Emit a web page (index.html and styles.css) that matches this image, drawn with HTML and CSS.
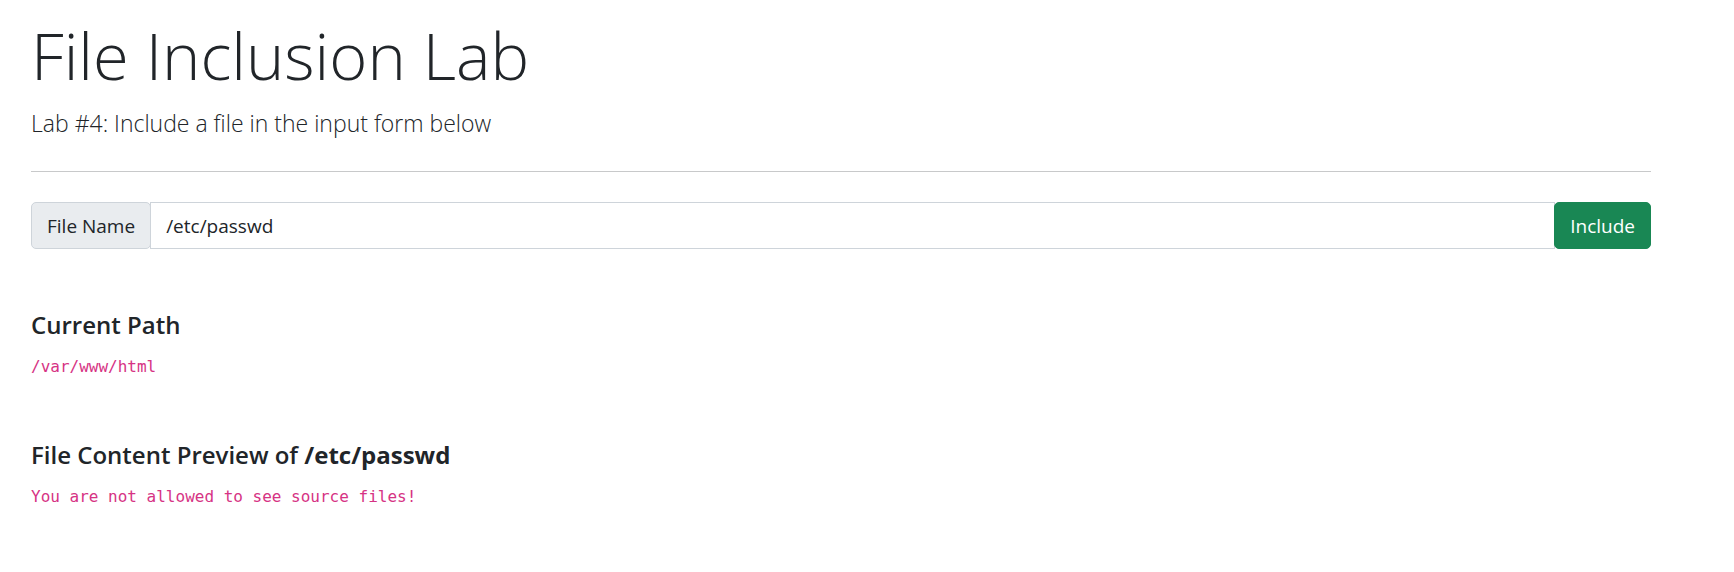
FILE: index.html
```html
<!DOCTYPE html>
<html lang="en">
<head>
<meta charset="utf-8">
<meta name="viewport" content="width=device-width, initial-scale=1">
<title>File Inclusion Lab</title>
<link rel="stylesheet" href="styles.css">
</head>
<body>
<main class="container">
  <header class="hero">
    <h1 class="display">File Inclusion Lab</h1>
    <p class="lead">Lab #4: Include a file in the input form below</p>
  </header>
  <hr class="divider">
  <form class="input-group">
    <label class="input-label" for="file">File Name</label>
    <input class="input-control" id="file" name="file" type="text" value="/etc/passwd">
    <button class="button" type="submit">Include</button>
  </form>
  <section class="result">
    <h2 class="result-title">Current Path</h2>
    <code class="code">/var/www/html</code>
  </section>
  <section class="result">
    <h2 class="result-title">File Content Preview of <strong>/etc/passwd</strong></h2>
    <code class="code">You are not allowed to see source files!</code>
  </section>
</main>
</body>
</html>
```
FILE: styles.css
```css
* { box-sizing: border-box; }
body {
  margin: 0;
  background: #fff;
  color: #212529;
  font-family: "Segoe UI", "Open Sans", "Noto Sans", sans-serif;
  font-size: 19px;
  line-height: 30px;
}
.container { padding: 13px 83px 0 31px; }
.display {
  margin: 0 0 11px;
  font-size: 65px;
  font-weight: 300;
  line-height: 84px;
}
.lead {
  margin: 0;
  font-size: 23px;
  font-weight: 300;
  line-height: 30px;
}
.divider {
  height: 1px;
  margin: 33px 0 30px;
  border: 0;
  background: #c8c9ca;
}
.input-group { display: flex; }
.input-label {
  padding: 8px 15px 7px;
  border: 1px solid #ced4da;
  border-radius: 5px;
  background: #e9ecef;
}
.input-control {
  flex: 1;
  min-width: 0;
  margin: 0 -1px;
  padding: 8px 15px 7px;
  border: 1px solid #ced4da;
  border-radius: 0;
  background: #fff;
  color: inherit;
  font: inherit;
}
.button {
  position: relative;
  padding: 8px 15px 7px;
  border: 1px solid #198754;
  border-radius: 5px;
  background: #198754;
  color: #fff;
  font: inherit;
}
.input-group + .result { margin-top: 61px; }
.result { margin-top: 58px; }
.result-title {
  margin: 0 0 12px;
  font-size: 24px;
  font-weight: 600;
  line-height: 30px;
}
.result-title strong { font-weight: 700; }
.code {
  display: block;
  color: #d63384;
  font-family: Consolas, "DejaVu Sans Mono", monospace;
  font-size: 16px;
  line-height: 30px;
}
```
